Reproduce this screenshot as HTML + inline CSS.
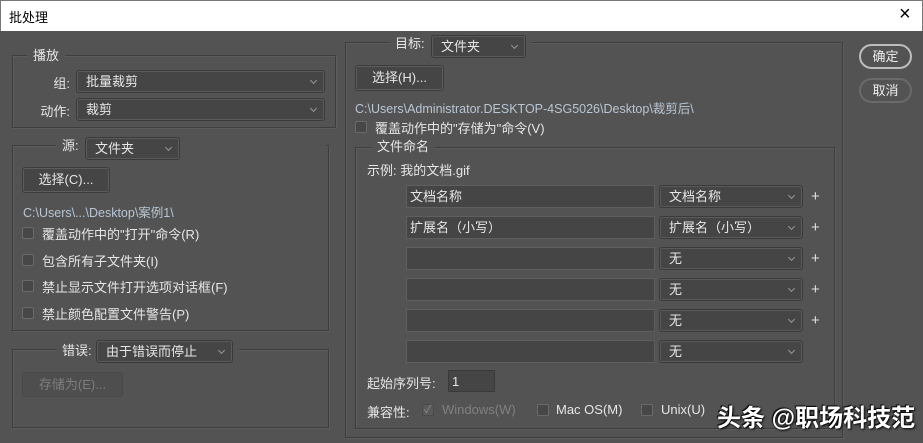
<!DOCTYPE html>
<html><head><meta charset="utf-8"><style>
*{margin:0;padding:0;box-sizing:border-box}
body{width:923px;height:443px;background:#535353;font-family:"Liberation Sans","Noto Sans CJK SC",sans-serif;font-size:13px;color:#e6e6e6;position:relative;overflow:hidden}
.a{position:absolute;white-space:nowrap}
.title{left:0;top:0;width:923px;height:31px;background:#fff;border:1px solid #777;border-bottom:none}
.g{position:absolute;border:1px solid #3d3d3d;box-shadow:inset 1px 1px 0 #5d5d5d,1px 1px 0 #5d5d5d}
.lg{position:absolute;background:#535353;padding:0 6px;line-height:16px}
.sel{position:absolute;background:#454545;border:1px solid #3a3a3a;border-radius:3px;height:23px;line-height:21px;padding-left:9px;box-shadow:0 0 0 1px #5a5a5a inset}
.sel:after{content:"";position:absolute;right:8px;top:7px;width:4px;height:4px;border-right:1px solid #999;border-bottom:1px solid #999;transform:rotate(45deg)}
.inp{position:absolute;background:#454545;border:1px solid #5f5f5f;height:23px;line-height:21px;padding-left:3px}
.btn{position:absolute;background:#454545;border:1px solid #3c3c3c;border-radius:3px;text-align:center;line-height:23px;box-shadow:inset 0 0 0 1px #5c5c5c}
.cb{position:absolute;width:12px;height:12px;border:1px solid #6a6a6a;background:#474747;border-radius:2px}
.path{color:#b9c6d3;font-size:12.5px}
.plus{position:absolute;color:#e0e0e0;font-size:15px}
.pill{position:absolute;width:53px;height:25px;border:2px solid #bdbdbd;border-radius:13px;text-align:center;line-height:21px;color:#eee}
.r{text-align:right}
</style></head><body>
<div class="a title"></div>
<div class="a" style="left:9px;top:7px;color:#000;font-size:13px">批处理</div>
<div class="a" style="left:899px;top:3px;color:#000;font-size:20px;font-weight:300">×</div>

<!-- play group -->
<div class="g" style="left:12px;top:55px;width:324px;height:73px"></div>
<div class="lg" style="left:27px;top:48px">播放</div>
<div class="a r" style="left:20px;width:50px;top:73px">组:</div>
<div class="sel" style="left:76px;top:70px;width:249px">批量裁剪</div>
<div class="a r" style="left:20px;width:50px;top:101px">动作:</div>
<div class="sel" style="left:76px;top:98px;width:249px">裁剪</div>

<!-- source group -->
<div class="g" style="left:12px;top:145px;width:317px;height:186px"></div>
<div class="lg" style="left:56px;top:138px;width:270px">源:</div>
<div class="sel" style="left:85px;top:137px;width:95px">文件夹</div>
<div class="btn" style="left:22px;top:167px;width:88px;height:26px">选择(C)...</div>
<div class="a path" style="left:23px;top:202px">C:\Users\...\Desktop\案例1\</div>
<div class="cb" style="left:22px;top:227px"></div><div class="a" style="left:42px;top:224px">覆盖动作中的"打开"命令(R)</div>
<div class="cb" style="left:22px;top:254px"></div><div class="a" style="left:42px;top:251px">包含所有子文件夹(I)</div>
<div class="cb" style="left:22px;top:280px"></div><div class="a" style="left:42px;top:277px">禁止显示文件打开选项对话框(F)</div>
<div class="cb" style="left:22px;top:307px"></div><div class="a" style="left:42px;top:304px">禁止颜色配置文件警告(P)</div>

<!-- error group -->
<div class="g" style="left:12px;top:349px;width:317px;height:79px"></div>
<div class="lg" style="left:56px;top:343px;width:183px">错误:</div>
<div class="sel" style="left:96px;top:340px;width:137px">由于错误而停止</div>
<div class="btn" style="left:22px;top:372px;width:101px;height:25px;color:#7d7d7d;background:#4e4e4e;box-shadow:none;border-color:#484848">存储为(E)...</div>

<!-- target group -->
<div class="g" style="left:345px;top:42px;width:498px;height:396px"></div>
<div class="lg" style="left:389px;top:36px;width:143px">目标:</div>
<div class="sel" style="left:431px;top:35px;width:95px">文件夹</div>
<div class="btn" style="left:355px;top:65px;width:89px;height:26px">选择(H)...</div>
<div class="a path" style="left:355px;top:98px">C:\Users\Administrator.DESKTOP-4SG5026\Desktop\裁剪后\</div>
<div class="cb" style="left:355px;top:121px"></div><div class="a" style="left:375px;top:118px">覆盖动作中的"存储为"命令(V)</div>

<div class="g" style="left:355px;top:147px;width:480px;height:282px"></div>
<div class="lg" style="left:371px;top:139px">文件命名</div>
<div class="a" style="left:367px;top:160px">示例: 我的文档.gif</div>

<div class="inp" style="left:406px;top:185px;width:249px">文档名称</div>
<div class="sel" style="left:659px;top:185px;width:144px">文档名称</div><div class="plus" style="left:811px;top:188px">+</div>
<div class="inp" style="left:406px;top:216px;width:249px">扩展名（小写）</div>
<div class="sel" style="left:659px;top:216px;width:144px">扩展名（小写）</div><div class="plus" style="left:811px;top:219px">+</div>
<div class="inp" style="left:406px;top:247px;width:249px"></div>
<div class="sel" style="left:659px;top:247px;width:144px">无</div><div class="plus" style="left:811px;top:250px">+</div>
<div class="inp" style="left:406px;top:278px;width:249px"></div>
<div class="sel" style="left:659px;top:278px;width:144px">无</div><div class="plus" style="left:811px;top:281px">+</div>
<div class="inp" style="left:406px;top:309px;width:249px"></div>
<div class="sel" style="left:659px;top:309px;width:144px">无</div><div class="plus" style="left:811px;top:312px">+</div>
<div class="inp" style="left:406px;top:340px;width:249px"></div>
<div class="sel" style="left:659px;top:340px;width:144px">无</div>

<div class="a" style="left:367px;top:373px">起始序列号:</div>
<div class="inp" style="left:448px;top:370px;width:47px;height:22px;border-color:#3a3a3a">1</div>
<div class="a" style="left:367px;top:402px">兼容性:</div>
<div class="cb" style="left:422px;top:404px;background:#5a5a5a;border-color:#4a4a4a"></div>
<div class="a" style="left:424px;top:401px;color:#8a8a8a;font-size:11px">✓</div>
<div class="a" style="left:442px;top:402px;color:#808080">Windows(W)</div>
<div class="cb" style="left:537px;top:404px"></div><div class="a" style="left:556px;top:402px">Mac OS(M)</div>
<div class="cb" style="left:641px;top:404px"></div><div class="a" style="left:661px;top:402px">Unix(U)</div>

<div class="pill" style="left:859px;top:44px">确定</div>
<div class="pill" style="left:859px;top:78px;border-color:#6a6a6a">取消</div>

<div class="a" style="left:717px;top:398px;font-size:24px;font-weight:bold;color:#fff;text-shadow:1px 1px 2px #000,-1px -1px 1px #000">头条 @职场科技范</div>
</body></html>
